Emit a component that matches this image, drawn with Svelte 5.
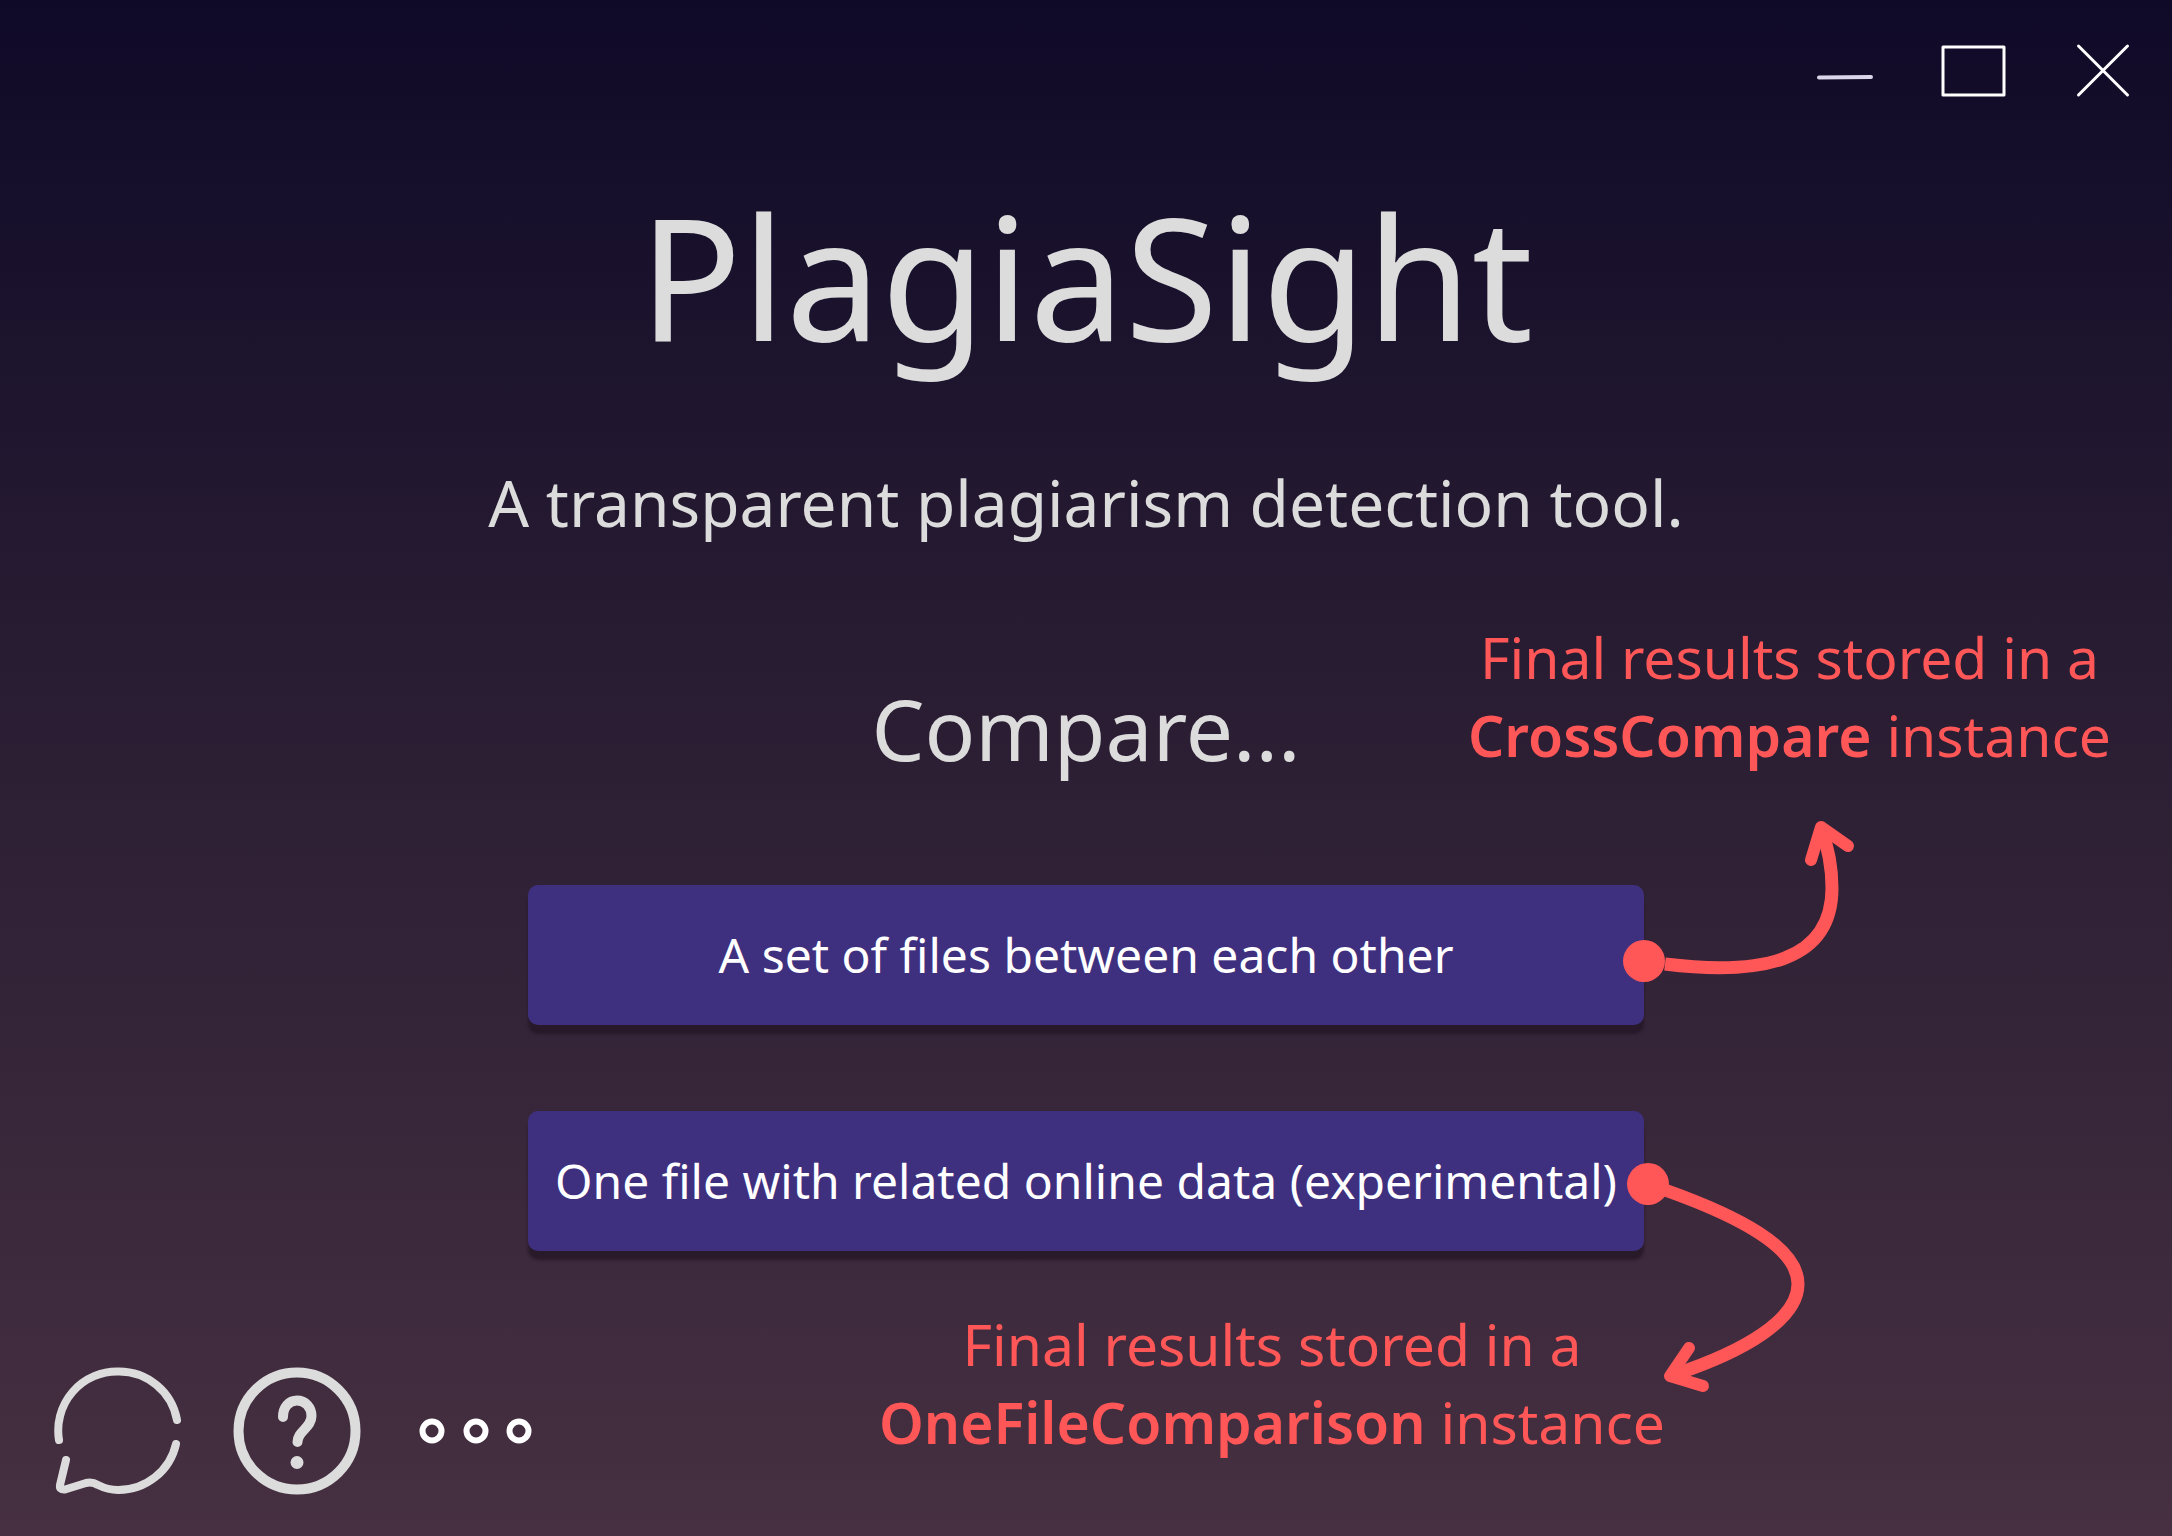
<script>
  const choices = [
    { label: 'A set of files between each other', note: 'CrossCompare', kind: 'cross' },
    { label: 'One file with related online data (experimental)', note: 'OneFileComparison', kind: 'single' }
  ];
</script>

<div class="window">
  <header class="titlebar">
    <button class="icon-button control" aria-label="Minimize">
      <svg viewBox="0 0 80 72"><path class="soft" d="M14 42.500L66 42" /></svg>
    </button>
    <button class="icon-button control" aria-label="Maximize">
      <svg viewBox="0 0 80 72"><rect x="9" y="12" width="61" height="48" /></svg>
    </button>
    <button class="icon-button control" aria-label="Close">
      <svg viewBox="0 0 80 72"><path d="M15.500 11L64.500 60M64.500 11L15.500 60" /></svg>
    </button>
  </header>

  <main>
    <h1>PlagiaSight</h1>
    <p class="tagline">A transparent plagiarism detection tool.</p>
    <h2>Compare...</h2>

    <div class="choices">
      {#each choices as choice}
        <div class="choice">
          <button class="choice-button">{choice.label}</button>
          {#if choice.kind === 'cross'}
            <svg class="arrow cross" viewBox="0 0 240 170" aria-hidden="true">
              <circle cx="21" cy="146" r="21" />
              <path d="M42 149C140 161 209 146 209 73C209 50 205 32 198 13" />
              <path class="head" d="M188 45L198 12L225 31" />
            </svg>
          {:else}
            <svg class="arrow single" viewBox="0 0 190 240" aria-hidden="true">
              <circle cx="25" cy="23" r="21" />
              <path d="M42 29C115 55 175 86 175 123C175 158 123 190 50 214" />
              <path class="head" d="M66 187L47 215L80 225" />
            </svg>
          {/if}
          <p class="note {choice.kind}">
            Final results stored in a<br /><strong>{choice.note}</strong> instance
          </p>
        </div>
      {/each}
    </div>
  </main>

  <footer>
    <button class="icon-button tool" aria-label="Feedback">
      <svg viewBox="0 0 128 128">
        <path class="chat" d="M5 73A59 59 0 0 1 64 4.500A59 59 0 0 1 123 53" />
        <path class="chat" d="M122 77A59 59 0 0 1 64 123C56 123 50 121 44 118C39 115 36 115 32 116L11 122.500Q5 123 6 118L12 93" />
      </svg>
    </button>
    <button class="icon-button tool" aria-label="Help">
      <svg viewBox="0 0 128 128">
        <circle class="ring" cx="64" cy="64" r="58.500" />
        <path class="question" d="M50 50C50 40 56 33.500 64 33.500C72 33.500 78.500 40 78.500 49C78.500 61 64.500 64 64.500 75" />
        <circle class="point" cx="64" cy="95.500" r="6.500" />
      </svg>
    </button>
    <button class="icon-button tool" aria-label="More">
      <svg viewBox="0 0 128 128">
        <circle class="dot" cx="20" cy="64" r="9.500" />
        <circle class="dot" cx="64" cy="64" r="9.500" />
        <circle class="dot" cx="107" cy="64" r="9.500" />
      </svg>
    </button>
  </footer>
</div>

<style>
  :global(body) {
    margin: 0;
  }

  .window {
    box-sizing: border-box;
    min-height: 100vh;
    display: flex;
    flex-direction: column;
    overflow: hidden;
    color: #dcdcdc;
    background: linear-gradient(#0f0a28, #281c32 42%, #463041);
    font-family: 'Noto Sans', 'Open Sans', sans-serif;
    font-weight: 400;
  }

  .titlebar {
    display: flex;
    justify-content: flex-end;
    gap: 49px;
    padding: 35px 29px 0;
  }

  .icon-button {
    padding: 0;
    border: 0;
    background: none;
    cursor: pointer;
  }

  .icon-button svg {
    display: block;
    width: 100%;
    height: 100%;
    fill: none;
    stroke-linecap: round;
    stroke-linejoin: round;
  }

  .control {
    width: 80px;
    height: 72px;
    stroke: #ffffff;
    stroke-width: 3;
  }

  .control .soft {
    stroke: #dcd6ea;
    stroke-width: 4;
  }

  main {
    display: flex;
    flex-direction: column;
    align-items: center;
    text-align: center;
  }

  h1,
  h2,
  p {
    margin: 0;
    font-weight: inherit;
  }

  h1 {
    margin-top: 68px;
    font-size: 170px;
    line-height: 200px;
  }

  .tagline {
    margin-top: 84px;
    font-size: 64px;
    line-height: 88px;
  }

  h2 {
    margin-top: 122px;
    font-size: 84px;
    line-height: 120px;
  }

  .choices {
    display: grid;
    gap: 86px;
    width: 1116px;
    max-width: 100%;
    margin-top: 96px;
  }

  .choice {
    position: relative;
  }

  .choice-button {
    width: 100%;
    height: 140px;
    padding: 0;
    border: 0;
    border-radius: 10px;
    background: #3e307f;
    box-shadow: 0 9px 3px rgb(35 22 36 / 75%);
    color: #ffffff;
    font: inherit;
    font-size: 48px;
    line-height: 64px;
    white-space: nowrap;
    cursor: pointer;
  }

  .arrow {
    position: absolute;
    left: calc(100% - 21px);
    fill: none;
    stroke: #ff5757;
    stroke-width: 13;
  }

  .arrow circle {
    fill: #ff5757;
    stroke: none;
  }

  .head {
    stroke-width: 12;
    stroke-linecap: round;
    stroke-linejoin: round;
  }

  .arrow.cross {
    top: -70px;
    width: 240px;
    height: 170px;
  }

  .arrow.single {
    top: 50px;
    width: 190px;
    height: 240px;
  }

  .note {
    position: absolute;
    color: #ff5757;
    font-size: 57px;
    line-height: 78px;
    white-space: nowrap;
  }

  .note.cross {
    left: 940px;
    bottom: 251px;
  }

  .note.single {
    left: 351px;
    top: 194px;
  }

  strong {
    font-weight: 600;
  }

  footer {
    display: flex;
    gap: 51px;
    margin-top: auto;
    padding: 41px 54px;
  }

  .tool {
    width: 128px;
    height: 128px;
    stroke: #dcdcdc;
  }

  .chat {
    stroke-width: 8;
  }

  .ring,
  .question {
    stroke-width: 10;
  }

  .point {
    fill: #dcdcdc;
    stroke: none;
  }

  .dot {
    stroke: #ffffff;
    stroke-width: 6;
  }
</style>
